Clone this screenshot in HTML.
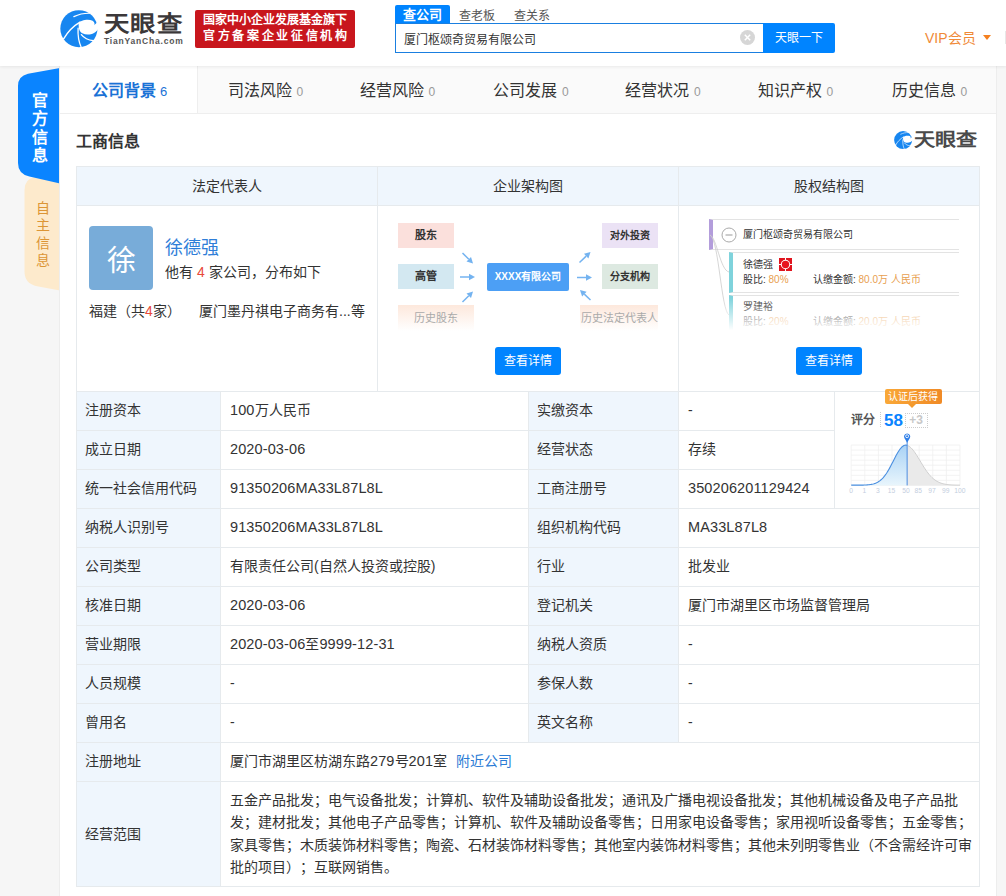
<!DOCTYPE html>
<html lang="zh-CN"><head><meta charset="utf-8">
<style>
*{box-sizing:border-box;margin:0;padding:0}
html,body{width:1006px;height:896px;overflow:hidden}
body{background:#f6f6f6;font-family:"Liberation Sans",sans-serif;color:#333;position:relative;font-size:14px;text-spacing-trim:space-all}
.abs{position:absolute}
#hdr{position:absolute;left:0;top:0;width:1006px;height:66px;background:#fff;box-shadow:0 1px 3px rgba(0,0,0,.07);z-index:5}
#panel{position:absolute;left:60px;top:66px;width:936px;height:840px;background:#fff;box-shadow:-1px 0 0 #ededed,1px 0 0 #ededed}
#nav{position:absolute;left:0;top:0;width:936px;height:48px;background:#fafafa;border-bottom:1px solid #eee;display:flex}
.navt{position:absolute;top:67.5px;line-height:46px;font-size:16px;color:#333;white-space:nowrap}
#nav .t{width:133.7px;height:46px;line-height:46px;text-align:center;font-size:16px;color:#333;white-space:nowrap}
.navt span{font-size:12px;color:#999;margin-left:5px}
#nav .t span{font-size:14px;color:#999;margin-left:4px}
.navt.on{color:#1a72d6;font-weight:bold}
.navt.on span{color:#1a72d6;font-weight:normal;margin-left:4px;font-size:13px}
#nav .t.on{background:#fff;color:#1e6fd0;font-weight:bold;border-right:1px solid #eee}
#nav .t.on span{color:#1e6fd0;font-weight:normal}
.hl{position:absolute;height:1px;background:#e6eaed}
.vl{position:absolute;width:1px;background:#e6eaed}
.bgl{position:absolute;background:#eff6fd}
.n{font-size:14.5px;letter-spacing:0.12px}
.tx{position:absolute;white-space:nowrap;font-size:14px;line-height:20px;color:#333}
.btn{position:absolute;width:66px;height:28px;background:#0084ff;border-radius:3px;color:#fff;font-size:12px;line-height:28px;text-align:center}
</style></head><body>

<div id="hdr">
  <svg class="abs" style="left:58.3px;top:8px" width="43.9" height="41.9" viewBox="0 0 939 896"><circle cx="447" cy="443" r="397" fill="#1786f0"/><g fill="none" stroke="#fff" stroke-linecap="round"><path d="M340 185 C450 130 560 110 680 112" stroke-width="26"/><path d="M470 300 C300 400 200 520 120 660" stroke-width="30"/><path d="M430 430 C420 600 450 740 500 850" stroke-width="28"/><path d="M500 570 C560 650 660 690 760 700" stroke-width="28"/></g><path fill="#fff" d="M440 330 C480 260 640 230 740 270 C790 300 790 350 770 370 L850 300 L880 420 C800 560 640 600 520 540 C470 510 440 460 440 330 Z"/></svg>
  <div class="abs" style="left:104px;top:8.5px;font-size:21.5px;line-height:30px;color:#3b3839;font-weight:bold;letter-spacing:0.4px;transform:scaleX(1.18);transform-origin:0 0">天眼查</div>
  <div class="abs" style="left:104px;top:36px;font-size:8.5px;line-height:10px;color:#555;font-weight:bold;letter-spacing:0.8px">TianYanCha.com</div>
  <div class="abs" style="left:195px;top:10px;width:160px;height:37.5px;background:#c8161d;border-radius:2px;color:#fff;font-size:12px;line-height:16px;padding-top:2px;text-align:center;font-weight:bold">
    <div>国家中小企业发展基金旗下</div>
    <div style="letter-spacing:2.7px;padding-left:2.7px;white-space:nowrap">官方备案企业征信机构</div>
  </div>
  <div class="abs" style="left:395px;top:5px;width:55px;height:18px;background:#0084ff;color:#fff;font-size:13px;line-height:20px;text-align:center;border-radius:2px 2px 0 0;font-weight:bold">查公司</div>
  <div class="abs" style="left:459px;top:5.5px;font-size:12px;line-height:20px;color:#555">查老板</div>
  <div class="abs" style="left:514px;top:5.5px;font-size:12px;line-height:20px;color:#555">查关系</div>
  <div class="abs" style="left:395px;top:22.5px;width:370px;height:30px;border:1px solid #1a7fe0;background:#fff"></div>
  <div class="abs" style="left:404px;top:30.5px;font-size:12px;line-height:18px;color:#333">厦门枢颂奇贸易有限公司</div>
  <svg class="abs" style="left:740px;top:30px" width="15" height="15" viewBox="0 0 15 15"><circle cx="7.5" cy="7.5" r="7.5" fill="#d6d6d6"/><path d="M4.8 4.8 L10.2 10.2 M10.2 4.8 L4.8 10.2" stroke="#fff" stroke-width="1.5"/></svg>
  <div class="abs" style="left:763px;top:23px;width:72px;height:30px;background:#0084ff;color:#fff;font-size:12px;line-height:30px;text-align:center;border-radius:0 2px 2px 0">天眼一下</div>
  <div class="abs" style="left:925px;top:28px;font-size:14px;line-height:20px;color:#f08a38">VIP会员</div>
  <div class="abs" style="left:983px;top:35px;width:0;height:0;border-left:4px solid transparent;border-right:4px solid transparent;border-top:5px solid #f5801f"></div>
  <div class="abs" style="left:1005px;top:31px;width:1px;height:13px;background:#e8e8e8"></div>
</div>

<svg class="abs" style="left:0;top:60px" width="60" height="240" viewBox="0 60 60 240">
  <path d="M60 172 L60 290.5 L37 286.3 Q24.5 283.5 24.5 271.5 L24.5 190 Q24.5 179 35 177 Z" fill="#fdeacc"/>
  <path d="M60 68 L28 73.7 Q18 76 18 86 L18 163 Q18 174 29.4 176.5 L60 183.5 Z" fill="#0a84ff"/>
</svg>
<div class="abs" style="left:31px;top:91.5px;width:18px;font-size:16px;line-height:18.5px;color:#fff;font-weight:bold;text-align:center">官方信息</div>
<div class="abs" style="left:35px;top:200px;width:16px;font-size:14px;line-height:17.3px;color:#dc9535;text-align:center">自主信息</div>

<div id="panel">
  <div id="nav"></div>
  <div class="abs" style="left:0;top:0;width:138px;height:47px;background:#fff;border-right:1px solid #eee"></div>
</div>
<div class="navt on" style="left:92px">公司背景<span>6</span></div>
<div class="navt" style="left:227.5px">司法风险<span>0</span></div>
<div class="navt" style="left:359.6px">经营风险<span>0</span></div>
<div class="navt" style="left:493px">公司发展<span>0</span></div>
<div class="navt" style="left:625px">经营状况<span>0</span></div>
<div class="navt" style="left:757.5px">知识产权<span>0</span></div>
<div class="navt" style="left:891.6px">历史信息<span>0</span></div>
<div class="abs" style="left:76px;top:130px;font-size:16px;line-height:24px;font-weight:bold;color:#333">工商信息</div>
<svg class="abs" style="left:892.9px;top:130px" width="21.3" height="20.3" viewBox="0 0 939 896"><circle cx="447" cy="443" r="397" fill="#1786f0"/><g fill="none" stroke="#fff" stroke-linecap="round"><path d="M340 185 C450 130 560 110 680 112" stroke-width="26"/><path d="M470 300 C300 400 200 520 120 660" stroke-width="30"/><path d="M430 430 C420 600 450 740 500 850" stroke-width="28"/><path d="M500 570 C560 650 660 690 760 700" stroke-width="28"/></g><path fill="#fff" d="M440 330 C480 260 640 230 740 270 C790 300 790 350 770 370 L850 300 L880 420 C800 560 640 600 520 540 C470 510 440 460 440 330 Z"/></svg>
<div class="abs" style="left:914px;top:128px;font-size:18px;line-height:24px;color:#4a4a4a;font-weight:bold;letter-spacing:0;transform:scaleX(1.17);transform-origin:0 0">天眼查</div>

<div class="bgl" style="left:76px;top:166px;width:904px;height:40px"></div>
<div class="tx" style="left:76px;top:176px;width:301px;text-align:center">法定代表人</div>
<div class="tx" style="left:377px;top:176px;width:301px;text-align:center">企业架构图</div>
<div class="tx" style="left:678px;top:176px;width:302px;text-align:center">股权结构图</div>
<div class="bgl" style="left:76px;top:391px;width:144px;height:495px"></div>
<div class="bgl" style="left:528px;top:391px;width:150px;height:351px"></div>
<div class="hl" style="left:76px;top:166px;width:904px"></div>
<div class="hl" style="left:76px;top:205px;width:904px"></div>
<div class="hl" style="left:76px;top:391px;width:904px"></div>
<div class="hl" style="left:76px;top:430px;width:758px"></div>
<div class="hl" style="left:76px;top:469px;width:758px"></div>
<div class="hl" style="left:76px;top:508px;width:904px"></div>
<div class="hl" style="left:76px;top:547px;width:904px"></div>
<div class="hl" style="left:76px;top:586px;width:904px"></div>
<div class="hl" style="left:76px;top:625px;width:904px"></div>
<div class="hl" style="left:76px;top:664px;width:904px"></div>
<div class="hl" style="left:76px;top:703px;width:904px"></div>
<div class="hl" style="left:76px;top:742px;width:904px"></div>
<div class="hl" style="left:76px;top:781px;width:904px"></div>
<div class="hl" style="left:76px;top:886px;width:904px"></div>
<div class="vl" style="left:76px;top:166px;height:721px"></div>
<div class="vl" style="left:979px;top:166px;height:721px"></div>
<div class="vl" style="left:377px;top:166px;height:225px"></div>
<div class="vl" style="left:678px;top:166px;height:225px"></div>
<div class="vl" style="left:220px;top:391px;height:495px"></div>
<div class="vl" style="left:528px;top:391px;height:351px"></div>
<div class="vl" style="left:678px;top:391px;height:351px"></div>
<div class="vl" style="left:834px;top:391px;height:117px"></div>
<div class="tx" style="left:85px;top:400px">注册资本</div>
<div class="tx" style="left:230px;top:400px"><span class="n">100</span>万人民币</div>
<div class="tx" style="left:537px;top:400px">实缴资本</div>
<div class="tx" style="left:688px;top:400px">-</div>
<div class="tx" style="left:85px;top:439px">成立日期</div>
<div class="tx" style="left:230px;top:439px"><span class="n">2020-03-06</span></div>
<div class="tx" style="left:537px;top:439px">经营状态</div>
<div class="tx" style="left:688px;top:439px">存续</div>
<div class="tx" style="left:85px;top:478px">统一社会信用代码</div>
<div class="tx" style="left:230px;top:478px"><span class="n">91350206MA33L87L8L</span></div>
<div class="tx" style="left:537px;top:478px">工商注册号</div>
<div class="tx" style="left:688px;top:478px"><span class="n">350206201129424</span></div>
<div class="tx" style="left:85px;top:517px">纳税人识别号</div>
<div class="tx" style="left:230px;top:517px"><span class="n">91350206MA33L87L8L</span></div>
<div class="tx" style="left:537px;top:517px">组织机构代码</div>
<div class="tx" style="left:688px;top:517px"><span class="n">MA33L87L8</span></div>
<div class="tx" style="left:85px;top:556px">公司类型</div>
<div class="tx" style="left:230px;top:556px">有限责任公司(自然人投资或控股)</div>
<div class="tx" style="left:537px;top:556px">行业</div>
<div class="tx" style="left:688px;top:556px">批发业</div>
<div class="tx" style="left:85px;top:595px">核准日期</div>
<div class="tx" style="left:230px;top:595px"><span class="n">2020-03-06</span></div>
<div class="tx" style="left:537px;top:595px">登记机关</div>
<div class="tx" style="left:688px;top:595px">厦门市湖里区市场监督管理局</div>
<div class="tx" style="left:85px;top:634px">营业期限</div>
<div class="tx" style="left:230px;top:634px"><span class="n">2020-03-06</span>至<span class="n">9999-12-31</span></div>
<div class="tx" style="left:537px;top:634px">纳税人资质</div>
<div class="tx" style="left:688px;top:634px">-</div>
<div class="tx" style="left:85px;top:673px">人员规模</div>
<div class="tx" style="left:230px;top:673px">-</div>
<div class="tx" style="left:537px;top:673px">参保人数</div>
<div class="tx" style="left:688px;top:673px">-</div>
<div class="tx" style="left:85px;top:712px">曾用名</div>
<div class="tx" style="left:230px;top:712px">-</div>
<div class="tx" style="left:537px;top:712px">英文名称</div>
<div class="tx" style="left:688px;top:712px">-</div>
<div class="tx" style="left:85px;top:751px">注册地址</div>
<div class="tx" style="left:230px;top:751px">厦门市湖里区枋湖东路<span class="n">279</span>号<span class="n">201</span>室<span style="color:#2a7bd5;margin-left:9px">附近公司</span></div>
<div class="tx" style="left:85px;top:824px">经营范围</div>
<div class="tx" style="left:230px;top:790.0px">五金产品批发；电气设备批发；计算机、软件及辅助设备批发；通讯及广播电视设备批发；其他机械设备及电子产品批</div>
<div class="tx" style="left:230px;top:812.3px">发；建材批发；其他电子产品零售；计算机、软件及辅助设备零售；日用家电设备零售；家用视听设备零售；五金零售；</div>
<div class="tx" style="left:230px;top:834.6px">家具零售；木质装饰材料零售；陶瓷、石材装饰材料零售；其他室内装饰材料零售；其他未列明零售业（不含需经许可审</div>
<div class="tx" style="left:230px;top:856.9px">批的项目）；互联网销售。</div>
<div class="abs" style="left:89px;top:226px;width:64px;height:64px;background:#78acd9;border-radius:4px;color:#fff;font-size:29px;line-height:70px;text-align:center">徐</div>
<div class="tx" style="left:165px;top:235px;font-size:18px;line-height:26px;color:#2f7ed8">徐德强</div>
<div class="tx" style="left:165px;top:262px">他有 <span style="color:#e8483a">4</span> 家公司，分布如下</div>
<div class="tx" style="left:89px;top:301px">福建（共<span style="color:#e8483a">4</span>家）</div>
<div class="tx" style="left:199px;top:301px">厦门墨丹祺电子商务有...等</div>
<div class="abs" style="left:398px;top:223px;width:56px;height:25px;background:#fbe0dc;color:#333;font-size:11px;line-height:25px;text-align:center;font-weight:bold;">股东</div>
<div class="abs" style="left:398px;top:264px;width:56px;height:25px;background:#d3e8f1;color:#333;font-size:11px;line-height:25px;text-align:center;font-weight:bold;">高管</div>
<div class="abs" style="left:398px;top:305px;width:76px;height:26px;background:linear-gradient(#fde8dc,#fff);color:#aaa;font-size:11px;line-height:26px;text-align:center;font-weight:normal;">历史股东</div>
<div class="abs" style="left:487px;top:263px;width:82px;height:28px;background:#4c9ff5;color:#fff;font-size:10px;line-height:28px;text-align:center;font-weight:bold;border-radius:2px">XXXX有限公司</div>
<div class="abs" style="left:602px;top:223px;width:56px;height:25px;background:#ebe2f5;color:#333;font-size:10px;line-height:25px;text-align:center;font-weight:bold;">对外投资</div>
<div class="abs" style="left:602px;top:264px;width:56px;height:25px;background:#dde9e1;color:#333;font-size:10px;line-height:25px;text-align:center;font-weight:bold;">分支机构</div>
<div class="abs" style="left:580px;top:305px;width:78px;height:26px;background:linear-gradient(#fde8dc,#fff);color:#aaa;font-size:11px;line-height:26px;text-align:center;font-weight:normal;">历史法定代表人</div>
<svg class="abs" style="left:0;top:0;overflow:visible" width="1" height="1"><g stroke="#74b3f0" stroke-width="1.5" fill="#74b3f0"><line x1="462.5" y1="253" x2="468.8" y2="259.3"/><path stroke="none" d="M473 263.5 L466.5 261.5 L471.0 257.0 Z"/><line x1="460" y1="277" x2="469.0" y2="277.0"/><path stroke="none" d="M475 277 L469.0 280.2 L469.0 273.8 Z"/><line x1="462.5" y1="302" x2="468.8" y2="295.7"/><path stroke="none" d="M473 291.5 L471.0 298.0 L466.5 293.5 Z"/><line x1="579.5" y1="262.5" x2="586.2" y2="256.1"/><path stroke="none" d="M590.5 252 L588.4 258.5 L584.0 253.8 Z"/><line x1="577" y1="277.5" x2="586.0" y2="277.5"/><path stroke="none" d="M592 277.5 L586.0 280.7 L586.0 274.3 Z"/><line x1="590.5" y1="300" x2="584.3" y2="294.1"/><path stroke="none" d="M580 290 L586.6 291.8 L582.1 296.5 Z"/></g></svg>
<div class="btn" style="left:495px;top:347px">查看详情</div>
<div class="abs" style="left:709px;top:219px;width:250px;height:31px;border-top:1px solid #e3e3e3;border-bottom:1px solid #e3e3e3;border-left:4px solid #b39ddb;background:#fff"></div>
<svg class="abs" style="left:721px;top:227px" width="16" height="16" viewBox="0 0 16 16"><circle cx="8" cy="8" r="7" fill="none" stroke="#aaa" stroke-width="1"/><line x1="4.5" y1="8" x2="11.5" y2="8" stroke="#999" stroke-width="1"/></svg>
<div class="tx" style="left:743px;top:227px;font-size:10px;line-height:16px">厦门枢颂奇贸易有限公司</div>
<div class="abs" style="left:729px;top:252px;width:230px;height:41px;border-top:1px solid #e3e3e3;border-bottom:1px solid #e3e3e3;border-left:4px solid #7fd3dc;background:#fff"></div>
<div class="tx" style="left:743px;top:257px;font-size:10px;line-height:16px">徐德强</div>
<svg class="abs" style="left:779px;top:258px" width="13" height="13" viewBox="0 0 13 13"><rect width="13" height="13" fill="#e0141e"/><path d="M0 6.5 H13 M6.5 0 V13" stroke="#fff" stroke-width="1"/><circle cx="6.5" cy="6.5" r="4.7" fill="#fff"/><circle cx="6.5" cy="6.5" r="3.7" fill="#e8141e"/></svg>
<div class="tx" style="left:743px;top:272px;font-size:10px;line-height:16px;color:#333">股比: <span style="color:#e8a050">80%</span></div>
<div class="tx" style="left:813px;top:272px;font-size:10px;line-height:16px;color:#333">认缴金额: <span style="color:#e8a050">80.0万 人民币</span></div>
<div class="abs" style="left:729px;top:295px;width:230px;height:36px;border-top:1px solid #e3e3e3;border-left:4px solid #7fd3dc;background:#fff"></div>
<div class="tx" style="left:743px;top:299px;font-size:10px;line-height:16px">罗建裕</div>
<div class="tx" style="left:743px;top:314px;font-size:10px;line-height:16px;color:#333">股比: <span style="color:#e8a050">20%</span></div>
<div class="tx" style="left:813px;top:314px;font-size:10px;line-height:16px;color:#333">认缴金额: <span style="color:#e8a050">20.0万 人民币</span></div>
<svg class="abs" style="left:705px;top:230px" width="30" height="110" viewBox="0 0 30 110"><path d="M5 5 C12 8 15 40 24 42 M5 5 C14 10 16 80 24 85" fill="none" stroke="#ccc" stroke-width="0.8"/></svg>
<div class="abs" style="left:700px;top:298px;width:265px;height:38px;background:linear-gradient(rgba(255,255,255,0),#fff 85%)"></div>
<div class="btn" style="left:796px;top:347px">查看详情</div>
<div class="abs" style="left:884.5px;top:389px;width:57px;height:15px;background:linear-gradient(90deg,#f9a838,#f08a26);border-radius:2px;color:#fff;font-size:10px;line-height:15px;text-align:center">认证后获得</div>
<div class="abs" style="left:908px;top:404px;width:0;height:0;border-left:4.5px solid transparent;border-right:4.5px solid transparent;border-top:4px solid #f39a2c"></div>
<div class="tx" style="left:851px;top:411px;font-size:12px;line-height:18px;color:#555;font-weight:bold">评分</div>
<div class="abs" style="left:879.5px;top:412px;width:48px;height:15px;border-left:1px dotted #ccc"></div>
<div class="tx" style="left:884px;top:410px;font-size:17px;line-height:22px;color:#0a84ff;font-weight:bold">58</div>
<div class="abs" style="left:904.5px;top:412.5px;width:23px;height:15px;border:1px dotted #ccc;color:#c8c8c8;font-size:12px;line-height:13px;text-align:center;font-weight:bold">+3</div>
<svg class="abs" style="left:845px;top:428px" width="125" height="70" viewBox="0 0 1006 563">
<defs><linearGradient id="bf" x1="0" y1="0" x2="0" y2="1"><stop offset="0" stop-color="#a9d2f5"/><stop offset="1" stop-color="#e8f5fc"/></linearGradient></defs>
<g stroke="#efefef" stroke-width="6"><line x1="50" y1="137.0" x2="925" y2="137.0"/><line x1="50" y1="177.6" x2="925" y2="177.6"/><line x1="50" y1="218.2" x2="925" y2="218.2"/><line x1="50" y1="258.8" x2="925" y2="258.8"/><line x1="50" y1="299.4" x2="925" y2="299.4"/><line x1="50" y1="340.0" x2="925" y2="340.0"/><line x1="50" y1="380.6" x2="925" y2="380.6"/><line x1="50" y1="421.2" x2="925" y2="421.2"/><line x1="50" y1="461.8" x2="925" y2="461.8"/><line x1="50.0" y1="137" x2="50.0" y2="462"/><line x1="159.4" y1="137" x2="159.4" y2="462"/><line x1="268.8" y1="137" x2="268.8" y2="462"/><line x1="378.2" y1="137" x2="378.2" y2="462"/><line x1="487.6" y1="137" x2="487.6" y2="462"/><line x1="597.0" y1="137" x2="597.0" y2="462"/><line x1="706.4" y1="137" x2="706.4" y2="462"/><line x1="815.8" y1="137" x2="815.8" y2="462"/><line x1="925.2" y1="137" x2="925.2" y2="462"/></g>
<path d="M50 462 L50 460.0 58 460.0 66 460.0 74 459.9 82 459.9 90 459.9 98 459.9 106 459.8 114 459.7 122 459.7 130 459.5 138 459.4 146 459.2 154 458.9 162 458.6 170 458.2 178 457.6 186 456.9 194 456.1 202 455.0 210 453.8 218 452.2 226 450.3 234 448.0 242 445.3 250 442.1 258 438.3 266 433.9 274 428.9 282 423.1 290 416.4 298 409.0 306 400.6 314 391.3 322 381.1 330 369.9 338 357.8 346 344.9 354 331.2 362 316.8 370 301.8 378 286.3 386 270.6 394 254.9 402 239.2 410 223.9 418 209.2 426 195.3 434 182.5 442 171.0 450 160.9 458 152.5 466 145.9 474 141.2 482 138.6 490 138.0 498 139.2 500 139.7 L500 462 Z" fill="url(#bf)"/>
<path d="M500 462 L500 139.7 508 142.7 516 147.1 524 153.0 532 160.1 540 168.4 548 177.9 556 188.3 564 199.6 572 211.5 580 224.0 588 237.0 596 250.2 604 263.6 612 276.9 620 290.2 628 303.3 636 316.0 644 328.3 652 340.1 660 351.4 668 362.0 676 372.1 684 381.5 692 390.2 700 398.2 708 405.6 716 412.3 724 418.4 732 423.8 740 428.8 748 433.1 756 437.0 764 440.4 772 443.4 780 445.9 788 448.2 796 450.1 804 451.8 812 453.2 820 454.4 828 455.4 836 456.2 844 456.9 852 457.5 860 458.0 868 458.4 876 458.7 884 459.0 892 459.2 900 459.4 908 459.5 916 459.6 924 459.7 925 459.7 L925 462 Z" fill="#eaeaea"/>
<path d="M50 460.0 58 460.0 66 460.0 74 459.9 82 459.9 90 459.9 98 459.9 106 459.8 114 459.7 122 459.7 130 459.5 138 459.4 146 459.2 154 458.9 162 458.6 170 458.2 178 457.6 186 456.9 194 456.1 202 455.0 210 453.8 218 452.2 226 450.3 234 448.0 242 445.3 250 442.1 258 438.3 266 433.9 274 428.9 282 423.1 290 416.4 298 409.0 306 400.6 314 391.3 322 381.1 330 369.9 338 357.8 346 344.9 354 331.2 362 316.8 370 301.8 378 286.3 386 270.6 394 254.9 402 239.2 410 223.9 418 209.2 426 195.3 434 182.5 442 171.0 450 160.9 458 152.5 466 145.9 474 141.2 482 138.6 490 138.0 498 139.2 500 139.7" fill="none" stroke="#4a8fe0" stroke-width="9"/>
<path d="M500 139.7 508 142.7 516 147.1 524 153.0 532 160.1 540 168.4 548 177.9 556 188.3 564 199.6 572 211.5 580 224.0 588 237.0 596 250.2 604 263.6 612 276.9 620 290.2 628 303.3 636 316.0 644 328.3 652 340.1 660 351.4 668 362.0 676 372.1 684 381.5 692 390.2 700 398.2 708 405.6 716 412.3 724 418.4 732 423.8 740 428.8 748 433.1 756 437.0 764 440.4 772 443.4 780 445.9 788 448.2 796 450.1 804 451.8 812 453.2 820 454.4 828 455.4 836 456.2 844 456.9 852 457.5 860 458.0 868 458.4 876 458.7 884 459.0 892 459.2 900 459.4 908 459.5 916 459.6 924 459.7 925 459.7" fill="none" stroke="#cfcfcf" stroke-width="8"/>
<line x1="500" y1="80" x2="500" y2="462" stroke="#4a8ae0" stroke-width="8"/>
<path d="M500 118 L478 80 A25 25 0 1 1 522 80 Z" fill="#2f7fe8"/>
<circle cx="500" cy="66" r="12" fill="none" stroke="#fff" stroke-width="7"/>
<g fill="#c3cede" font-size="54" font-family="Liberation Sans, sans-serif"><text x="50" y="520" text-anchor="middle">0</text><text x="155" y="520" text-anchor="middle">1</text><text x="265" y="520" text-anchor="middle">3</text><text x="375" y="520" text-anchor="middle">15</text><text x="490" y="520" text-anchor="middle">50</text><text x="590" y="520" text-anchor="middle">85</text><text x="700" y="520" text-anchor="middle">97</text><text x="810" y="520" text-anchor="middle">99</text><text x="925" y="520" text-anchor="middle">100</text></g>
</svg>
</body></html>
